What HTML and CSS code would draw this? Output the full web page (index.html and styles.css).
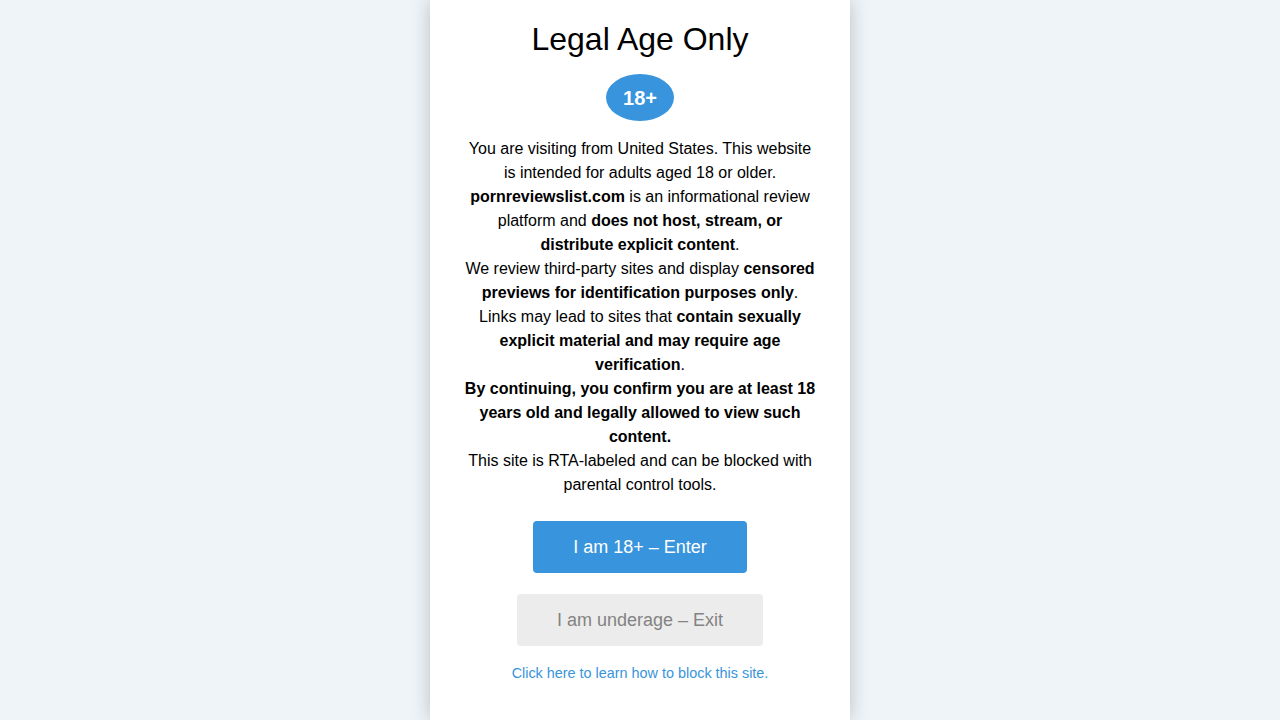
FILE: index.html
```html
<!DOCTYPE html>
<html lang="en">
<head>
<meta charset="utf-8">
<title>Legal Age Only</title>
<link rel="stylesheet" href="styles.css">
</head>
<body>
<div class="page">
  <div class="card">
    <h1 class="title">Legal Age Only</h1>
    <div class="badge">18+</div>
    <div class="text">
      <p>You are visiting from United States. This website is intended for adults aged 18 or older.</p>
      <p><strong>pornreviewslist.com</strong> is an informational review platform and <strong>does not host, stream, or distribute explicit content</strong>.</p>
      <p>We review third-party sites and display <strong>censored previews for identification purposes only</strong>.</p>
      <p>Links may lead to sites that <strong>contain sexually explicit material and may require age verification</strong>.</p>
      <p><strong>By continuing, you confirm you are at least 18 years old and legally allowed to view such content.</strong></p>
      <p>This site is RTA-labeled and can be blocked with parental control tools.</p>
    </div>
    <div class="actions">
      <button class="btn btn-enter">I am 18+ – Enter</button>
      <button class="btn btn-exit">I am underage – Exit</button>
      <a class="block-link" href="#">Click here to learn how to block this site.</a>
    </div>
  </div>
</div>
</body>
</html>
```

FILE: styles.css
```css
html, body {
  margin: 0;
  padding: 0;
  height: 100%;
}
body {
  background: #eef4f8;
  font-family: "Liberation Sans", Arial, sans-serif;
  color: #000;
  overflow: hidden;
}
.page {
  display: flex;
  justify-content: center;
  height: 100vh;
}
.card {
  width: 420px;
  box-sizing: border-box;
  height: 100%;
  background: #fff;
  padding: 21px 34px 30px;
  box-shadow: 0 0 18px rgba(0, 0, 0, 0.22);
  display: flex;
  flex-direction: column;
  align-items: center;
  text-align: center;
}
.title {
  margin: 0 0 16px;
  font-size: 32px;
  font-weight: normal;
  line-height: normal;
}
.badge {
  width: 68px;
  height: 47px;
  box-sizing: border-box;
  padding-top: 2px;
  border-radius: 50%;
  background: #3894dc;
  color: #fff;
  font-weight: bold;
  font-size: 20px;
  display: flex;
  align-items: center;
  justify-content: center;
}
.text {
  margin-top: 16px;
  font-size: 16px;
  line-height: 24px;
}
.text p {
  margin: 0;
}
.actions {
  margin-top: 24px;
  display: flex;
  flex-direction: column;
  align-items: center;
}
.btn {
  font-family: "Liberation Sans", Arial, sans-serif;
  font-size: 18px;
  line-height: 20px;
  padding: 16px 40px;
  border: none;
  border-radius: 4px;
  cursor: pointer;
}
.btn-enter {
  background: #3894dc;
  color: #fff;
}
.btn-exit {
  margin-top: 21px;
  background: #ececec;
  color: #838383;
}
.block-link {
  margin-top: 19px;
  font-size: 14.4px;
  line-height: 17px;
  color: #3894dc;
  text-decoration: none;
}
```
